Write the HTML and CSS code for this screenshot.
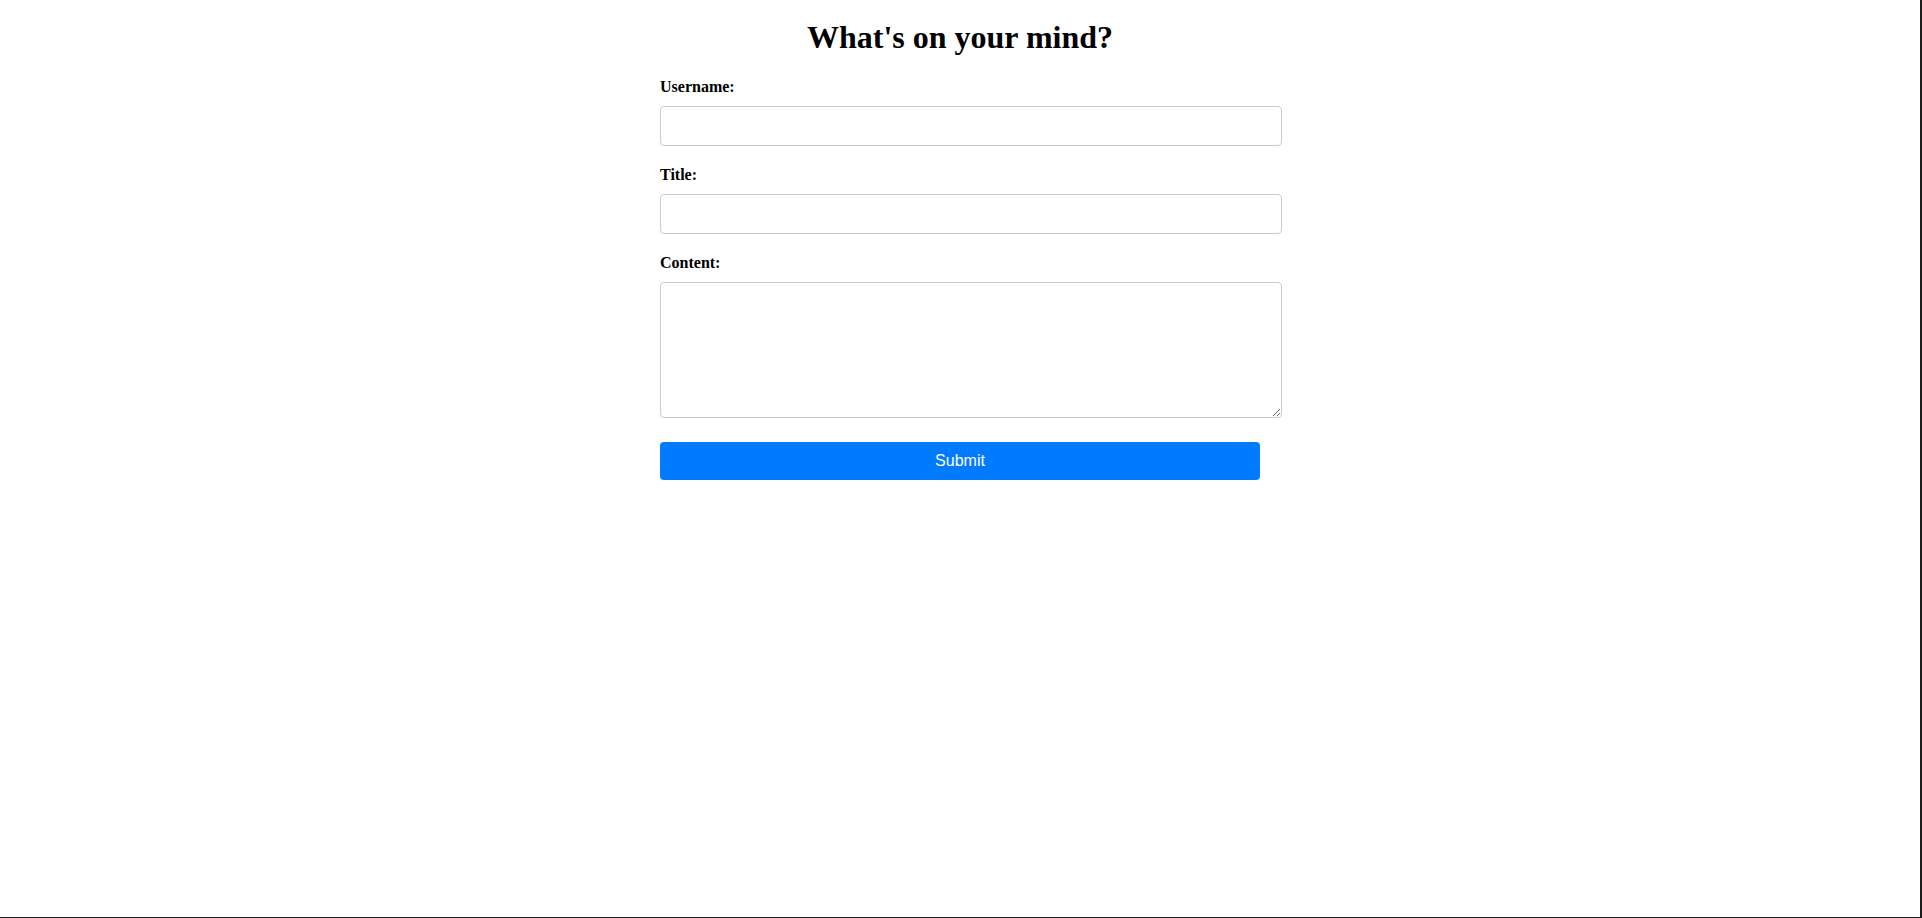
FILE: index.html
```html
<!DOCTYPE html>
<html lang="en">
<head>
<meta charset="utf-8">
<title>What's on your mind?</title>
<link rel="stylesheet" href="styles.css">
</head>
<body>
<main class="container">
  <h1 class="heading">What's on your mind?</h1>
  <form class="post-form">
    <div class="form-group">
      <label class="field-label" for="username">Username:</label>
      <input class="field-input" type="text" id="username" name="username">
    </div>
    <div class="form-group">
      <label class="field-label" for="title">Title:</label>
      <input class="field-input" type="text" id="title" name="title">
    </div>
    <div class="form-group form-group-last">
      <label class="field-label" for="content">Content:</label>
      <textarea class="field-input field-textarea" id="content" name="content"></textarea>
    </div>
    <button class="submit-btn" type="submit">Submit</button>
  </form>
</main>
</body>
</html>
```
FILE: styles.css
```css
html {
  background: #ffffff;
}

body {
  margin: 0;
  min-height: 100vh;
  box-sizing: border-box;
  border-right: 2px solid #1c1c1c;
  border-bottom: 1px solid #1c1c1c;
  font-family: "Liberation Serif", "Times New Roman", serif;
  color: #000;
}

.container {
  width: 600px;
  margin: 0 auto;
  padding-top: 1px;
}

.heading {
  font-family: "Liberation Serif", "Times New Roman", serif;
  font-size: 32px;
  font-weight: bold;
  text-align: center;
  margin: 18px 0 21.5px;
}

.post-form {
  display: flex;
  flex-direction: column;
  align-items: flex-start;
}

.form-group {
  margin-bottom: 20px;
}

.form-group-last {
  margin-bottom: 24px;
}

.field-label {
  display: block;
  font-size: 16px;
  font-weight: bold;
  margin-bottom: 10px;
}

.field-input {
  display: block;
  width: 600px;
  height: 18px;
  padding: 10px;
  margin: 0;
  border: 1px solid #cccccc;
  border-radius: 4px;
  font-family: "Liberation Sans", Arial, sans-serif;
  font-size: 16px;
  background: #fff;
  box-sizing: content-box;
}

.field-textarea {
  height: 114px;
  resize: vertical;
}

.submit-btn {
  width: 600px;
  height: 38px;
  padding: 0;
  border: none;
  border-radius: 4px;
  background: #007bff;
  color: #ffffff;
  font-family: "Liberation Sans", Arial, sans-serif;
  font-size: 16px;
  cursor: pointer;
}
```
